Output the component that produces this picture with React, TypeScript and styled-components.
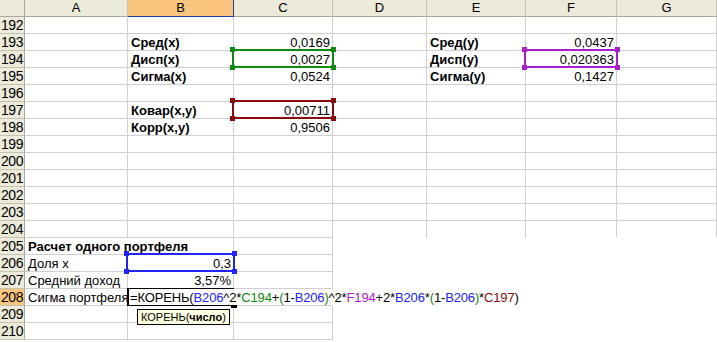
import { createGlobalStyle } from "styled-components";
import styled from "styled-components";

const GlobalStyle = createGlobalStyle`
  body {
    margin: 0;
    background: #fff;
    font-family: "Liberation Sans", Arial, sans-serif;
    font-size: 13px;
    color: #000;
  }
`;

const cols = ["A", "B", "C", "D", "E", "F", "G"];
const widths = [25, 103, 106, 99, 94, 99, 91, 100];
const rows = Array.from({ length: 19 }, (_, i) => 192 + i);

const Sheet = styled.div`
  display: grid;
  grid-template-columns: ${widths.map((w) => w + "px").join(" ")};
  grid-auto-rows: 17px;
  width: 717px;
  height: 342px;
  overflow: hidden;
`;

const Corner = styled.div`
  background: #ebeadb;
  border-right: 1px solid #aca899;
  border-bottom: 1px solid #aca899;
`;

const ColHead = styled.div<{ $active?: boolean }>`
  background: ${(p) => (p.$active ? "#f9c57f" : "#ebeadb")};
  border-right: 1px solid ${(p) => (p.$active ? "#1e3ea0" : "#c5c2b2")};
  border-bottom: 1px solid ${(p) => (p.$active ? "#1e3ea0" : "#aca899")};
  text-align: center;
  line-height: 16px;
`;

const RowHead = styled.div<{ $active?: boolean }>`
  background: ${(p) => (p.$active ? "#f9c57f" : "#ebeadb")};
  border-right: 1px solid #aca899;
  border-bottom: 1px solid #c5c2b2;
  text-align: center;
  line-height: 17px;
  font-size: 14px;
  letter-spacing: -0.5px;
`;

const Cell = styled.div<{
  $right?: boolean;
  $bold?: boolean;
  $blank?: boolean;
  $noBottom?: boolean;
  $span?: number;
}>`
  position: relative;
  box-sizing: border-box;
  border-right: 1px solid ${(p) => (p.$blank ? "transparent" : "#d0d0d0")};
  border-bottom: 1px solid
    ${(p) => (p.$blank || p.$noBottom ? "transparent" : "#d0d0d0")};
  grid-column: span ${(p) => p.$span ?? 1};
  padding: 0 2px 0 3px;
  line-height: 17px;
  white-space: nowrap;
  text-align: ${(p) => (p.$right ? "right" : "left")};
  font-weight: ${(p) => (p.$bold ? "bold" : "normal")};
`;

const Range = styled.div<{ $color: string }>`
  position: absolute;
  top: -2px;
  left: -2px;
  right: -2px;
  bottom: -1px;
  border: 2px solid ${(p) => p.$color};
  pointer-events: none;
  z-index: 2;
  & > i {
    position: absolute;
    width: 5px;
    height: 5px;
    background: ${(p) => p.$color};
  }
`;

const Active = styled.div`
  position: absolute;
  top: -1px;
  left: -1px;
  right: -1px;
  bottom: -1px;
  border: 2px solid #000;
  border-top-width: 1px;
  z-index: 3;
`;

const Editor = styled.div`
  position: absolute;
  top: 0;
  left: 1px;
  height: 16px;
  line-height: 17px;
  padding-left: 1px;
  background: #fff;
  z-index: 4;
  white-space: nowrap;
  letter-spacing: -0.15px;
`;

const FillHandle = styled.div`
  position: absolute;
  right: -4px;
  bottom: -3px;
  width: 6px;
  height: 3px;
  background: #000;
  z-index: 4;
`;

const Tip = styled.div`
  position: absolute;
  top: 20px;
  left: 9px;
  height: 14px;
  padding: 0 3px;
  background: #ffffe1;
  border: 1px solid #000;
  font-size: 11px;
  line-height: 14px;
  z-index: 5;
  white-space: nowrap;
  b {
    font-weight: bold;
  }
`;

const Ref = styled.span<{ $c: string }>`
  color: ${(p) => p.$c};
`;

const BLUE = "#2323f5";
const GREEN = "#118811";
const PURPLE = "#a81ec8";
const RED = "#850c0c";

function Handles() {
  return (
    <>
      <i style={{ left: -4, top: -4 }} />
      <i style={{ right: -4, top: -4 }} />
      <i style={{ left: -4, bottom: -4 }} />
      <i style={{ right: -4, bottom: -4 }} />
    </>
  );
}

type CellData = {
  text?: React.ReactNode;
  right?: boolean;
  bold?: boolean;
  range?: string;
  span?: number;
};

const data: Record<string, CellData> = {
  B193: { text: "Сред(x)", bold: true },
  C193: { text: "0,0169", right: true },
  E193: { text: "Сред(y)", bold: true },
  F193: { text: "0,0437", right: true },
  B194: { text: "Дисп(x)", bold: true },
  C194: { text: "0,0027", right: true, range: GREEN },
  E194: { text: "Дисп(y)", bold: true },
  F194: { text: "0,020363", right: true, range: PURPLE },
  B195: { text: "Сигма(x)", bold: true },
  C195: { text: "0,0524", right: true },
  E195: { text: "Сигма(y)", bold: true },
  F195: { text: "0,1427", right: true },
  B197: { text: "Ковар(x,y)", bold: true },
  C197: { text: "0,00711", right: true, range: RED },
  B198: { text: "Корр(x,y)", bold: true },
  C198: { text: "0,9506", right: true },
  A205: { text: "Расчет одного портфеля", bold: true, span: 2 },
  A206: { text: "Доля x" },
  B206: { text: "0,3", right: true, range: BLUE },
  A207: { text: "Средний доход" },
  B207: { text: "3,57%", right: true },
  A208: { text: "Сигма портфеля" },
};

function Formula() {
  return (
    <Editor>
      =КОРЕНЬ(<Ref $c={BLUE}>B206</Ref>^2*<Ref $c={GREEN}>C194</Ref>+
      <Ref $c={GREEN}>(</Ref>1-<Ref $c={BLUE}>B206</Ref>
      <Ref $c={GREEN}>)</Ref>^2*<Ref $c={PURPLE}>F194</Ref>+2*
      <Ref $c={BLUE}>B206</Ref>*<Ref $c={GREEN}>(</Ref>1-
      <Ref $c={BLUE}>B206</Ref>
      <Ref $c={GREEN}>)</Ref>*<Ref $c={RED}>C197</Ref>)
    </Editor>
  );
}

export default function App() {
  return (
    <>
      <GlobalStyle />
      <Sheet>
        <Corner />
        {cols.map((c) => (
          <ColHead key={c} $active={c === "B"}>
            {c}
          </ColHead>
        ))}
        {rows.map((r) => {
          const out: React.ReactNode[] = [
            <RowHead key={"h" + r} $active={r === 208}>
              {r}
            </RowHead>,
          ];
          for (let ci = 0; ci < cols.length; ci++) {
            const c = cols[ci];
            const id = c + r;
            const d = data[id] || {};
            const lower = ci >= 3 && r >= 205;
            out.push(
              <Cell
                key={id}
                $right={d.right}
                $bold={d.bold}
                $span={d.span}
                $blank={lower}
                $noBottom={ci >= 3 && r === 204}
              >
                {d.text}
                {d.range && (
                  <Range $color={d.range}>
                    <Handles />
                  </Range>
                )}
                {id === "B208" && (
                  <>
                    <Active />
                    <Formula />
                    <FillHandle />
                    <Tip>
                      КОРЕНЬ(<b>число</b>)
                    </Tip>
                  </>
                )}
              </Cell>
            );
            if (d.span) ci += d.span - 1;
          }
          return out;
        })}
      </Sheet>
    </>
  );
}
